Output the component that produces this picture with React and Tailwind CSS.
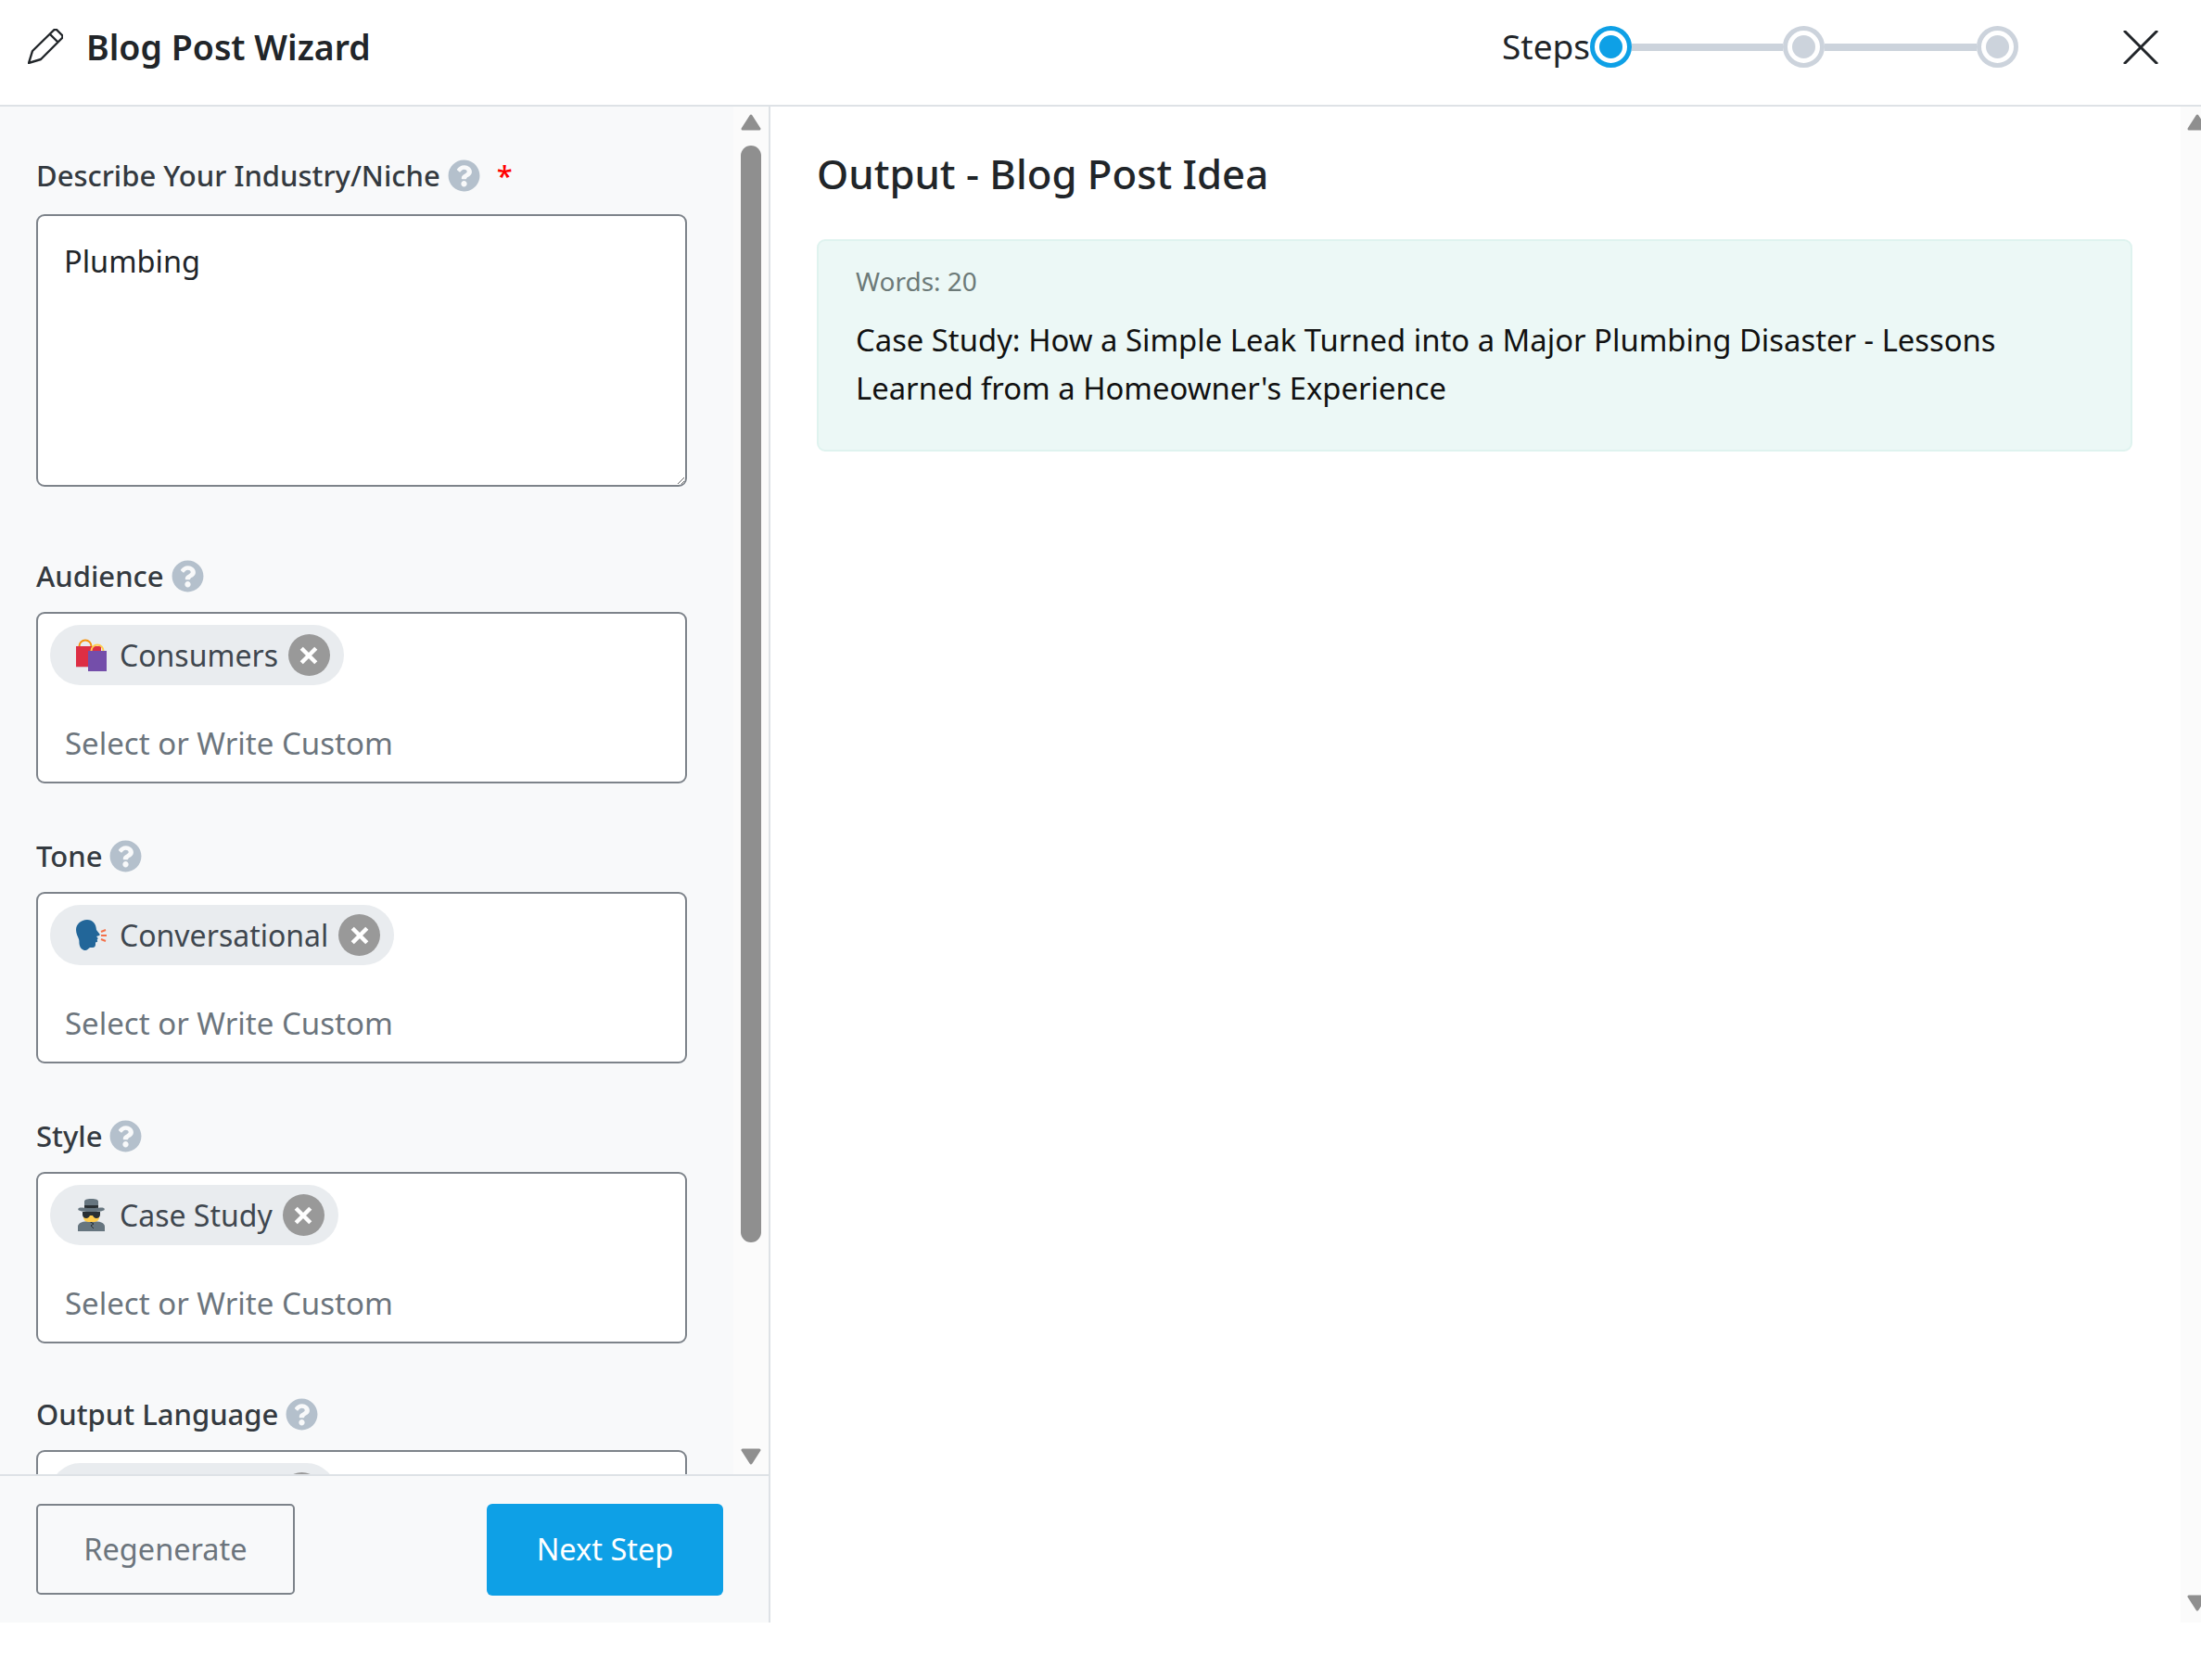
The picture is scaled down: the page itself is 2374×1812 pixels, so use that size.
import { FaQuestionCircle } from "react-icons/fa";

function BagsIcon() {
  return (
    <svg viewBox="0 0 33 35" className="w-[33px] h-[35px] shrink-0">
      <circle cx="10" cy="8" r="6.500" fill="none" stroke="#f4900c" strokeWidth="2" />
      <rect x="0" y="8" width="27" height="22" fill="#dd2e44" />
      <rect x="0" y="30" width="27" height="1" fill="#d9b8c4" />
      <circle cx="23" cy="13" r="6.500" fill="none" stroke="#ffcc4d" strokeWidth="2" />
      <rect x="13" y="13" width="20" height="22" fill="#744eaa" />
    </svg>
  );
}

function HeadIcon() {
  return (
    <svg viewBox="0 0 33 35" className="w-[33px] h-[35px] shrink-0">
      <path
        d="M12 1C5 1 0 6 0 12c0 4 2 7 3 10 .8 2.500 0 4 1 7 .8 2.600 3 5 6 5 2 0 3-2 5-3h3c2 0 3-1.500 3-3.500v-2c1.500 0 2.500-.7 2-1.700l-.3-1.300c1-.5 1.200-1.200.6-2l-1.300-1.500 3-1c.7-.3.800-1 .3-1.700L22 12C21.500 5 18 1 12 1z"
        fill="#226699"
      />
      <path d="M27 14l5-2M27 18h6M27 22l5 2" stroke="#f4714a" strokeWidth="2" fill="none" />
    </svg>
  );
}

function DetectiveIcon() {
  return (
    <svg viewBox="0 0 33 35" className="w-[33px] h-[35px] shrink-0">
      <path d="M2 35v-5c0-4 5-6 14.500-6S31 26 31 30v5z" fill="#66757f" />
      <path d="M14 24l5 3-3 2 3 3" fill="none" stroke="#292f33" strokeWidth="1" />
      <rect x="8" y="13" width="17" height="12" rx="5" fill="#ffcc4d" />
      <path d="M7 14h19v3c0 2.500-2 4-4 4s-3.500-1.500-4-3h-3c-.5 1.500-2 3-4 3s-4-1.500-4-4z" fill="#292f33" />
      <path d="M9 3c0-2 2-3 7.500-3S24 1 24 3v7H9z" fill="#66757f" />
      <rect x="9" y="7" width="15" height="3" fill="#292f33" />
      <path d="M3 10c3-1 4 0 13.500 0S27 9 30 10c1 .5 1 2 0 2.500-3 1-5 1.500-13.500 1.500S6 13.500 3 12.500c-1-.5-1-2 0-2.500z" fill="#66757f" />
    </svg>
  );
}

function Arrow({ down }) {
  return (
    <svg viewBox="0 0 24 18" className="w-[24px] h-[18px] shrink-0">
      <path
        d={down ? "M3 2h18l-9 14z" : "M12 2l9 14H3z"}
        fill="#8f8f8f"
        stroke="#8f8f8f"
        strokeWidth="3"
        strokeLinejoin="round"
      />
    </svg>
  );
}

function Chip({ icon, label }) {
  return (
    <span className="inline-flex items-center h-[65px] rounded-full bg-[#e9ecef] pl-[28px] pr-[15px]">
      <span className="w-[33px] h-[35px] shrink-0">{icon}</span>
      {/* last chip sits under the footer, only its top edge shows */}
      {label ? (
        <span className="ml-[14px] text-[32px] text-[#3f474f] whitespace-nowrap">{label}</span>
      ) : (
        <span className="ml-[14px] w-[163px]"></span>
      )}
      <span className="ml-[11px] w-[45px] h-[45px] rounded-full bg-[#999999] flex items-center justify-center shrink-0">
        <svg viewBox="0 0 18 18" className="w-[20px] h-[20px]">
          <path d="M2 2l14 14M16 2L2 16" stroke="#ffffff" strokeWidth="4" />
        </svg>
      </span>
    </span>
  );
}

function Label({ children, required }) {
  return (
    <div className="flex items-center h-[36px] text-[31px] font-medium text-[#343a40]">
      <span>{children}</span>
      <FaQuestionCircle className="ml-[8px] w-[35px] h-[35px] text-[#b4c0cc]" />
      {required && <span className="ml-[18px] text-[#ff0000]">*</span>}
    </div>
  );
}

function ChipField({ label, icon, value, className }) {
  return (
    <div className={className}>
      <Label>{label}</Label>
      <div className="mt-[21px] h-[185px] rounded-[9px] border-2 border-[#7d838a] bg-white flex flex-col items-start pl-[13px] pt-[12px]">
        <Chip icon={icon} label={value} />
        <input
          placeholder="Select or Write Custom"
          className="mt-[45px] w-full pl-[16px] h-[36px] text-[33px] outline-none placeholder:text-[#6c757d] bg-transparent"
        />
      </div>
    </div>
  );
}

export default function App() {
  return (
    <div className="w-[2374px] h-[1812px] bg-white text-[32.5px] leading-[36px] text-[#212529] font-['Noto_Sans',sans-serif] overflow-hidden">
      <div className="h-[1750px] flex flex-col">
        {/* Header */}
        <header className="h-[115px] shrink-0 border-b-2 border-[#dee2e6] flex items-center pl-[30px] pb-[12px]">
          <svg viewBox="0 0 38 38" className="w-[38px] h-[38px] shrink-0 -mt-[2px]">
            <path
              d="M1 37l4-13L28 1.500Q30 0 31.500 1.500L37 7q1 1.500 0 3L14 33zM24 6l8.500 8.500"
              fill="none"
              stroke="#212529"
              strokeWidth="2.400"
              strokeLinejoin="round"
            />
          </svg>
          <h1 className="ml-[25px] text-[37.5px] leading-[48px] font-semibold">Blog Post Wizard</h1>
          <div className="ml-auto flex items-center">
            <span className="text-[37px] leading-[48px] -mt-[2px] text-[#212529]">Steps</span>
            <span className="w-[45px] h-[45px] rounded-full border-[5px] border-[#0ea0e6] bg-white flex items-center justify-center">
              <span className="w-[25px] h-[25px] rounded-full bg-[#0ea0e6]"></span>
            </span>
            <span className="w-[163px] h-[8px] bg-[#ccd3dc]"></span>
            <span className="w-[45px] h-[45px] rounded-full border-[5px] border-[#ccd3dc] bg-white flex items-center justify-center">
              <span className="w-[25px] h-[25px] rounded-full bg-[#ccd3dc]"></span>
            </span>
            <span className="w-[164px] h-[8px] bg-[#ccd3dc]"></span>
            <span className="w-[45px] h-[45px] rounded-full border-[5px] border-[#ccd3dc] bg-white flex items-center justify-center">
              <span className="w-[25px] h-[25px] rounded-full bg-[#ccd3dc]"></span>
            </span>
          </div>
          <svg viewBox="0 0 38 36" className="ml-[113px] mr-[46px] w-[38px] h-[36px]">
            <path d="M1 0l36 36M37 0L1 36" stroke="#212529" strokeWidth="3" />
          </svg>
        </header>

        <div className="flex-1 flex min-h-0">
          {/* Left form panel */}
          <div className="w-[831px] shrink-0 border-r-2 border-[#dee2e6] bg-[#f8f9fa] flex flex-col">
            <div className="flex-1 flex min-h-0">
              <div className="flex-1 overflow-hidden pl-[39px] pr-[50px] pt-[56px]">
                <Label required>Describe Your Industry/Niche</Label>
                <textarea
                  defaultValue="Plumbing"
                  className="mt-[24px] block w-full h-[294px] rounded-[9px] border-2 border-[#7d838a] bg-white pl-[28px] pt-[31px] leading-[36px] outline-none"
                />
                <ChipField className="mt-[78px]" label="Audience" icon={<BagsIcon />} value="Consumers" />
                <ChipField className="mt-[60px]" label="Tone" icon={<HeadIcon />} value="Conversational" />
                <ChipField className="mt-[60px]" label="Style" icon={<DetectiveIcon />} value="Case Study" />
                <ChipField className="mt-[58px]" label="Output Language" />
              </div>
              <div className="w-[38px] shrink-0 bg-[#fbfbfb] flex flex-col items-center pt-[8px]">
                <Arrow />
                <div className="mt-[16px] w-[22px] h-[1183px] rounded-full bg-[#8f8f8f] shrink-0"></div>
                <div className="mt-[222px]">
                  <Arrow down />
                </div>
              </div>
            </div>
            <div className="h-[160px] shrink-0 border-t-2 border-[#dee2e6] flex items-center justify-between pl-[39px] pr-[49px]">
              <button className="w-[279px] h-[98px] rounded-[5px] border-2 border-[#7d838a] text-[#6c757d]">Regenerate</button>
              <button className="w-[255px] h-[99px] rounded-[6px] bg-[#0ea0e6] text-white">Next Step</button>
            </div>
          </div>

          {/* Right output panel */}
          <div className="flex-1 flex min-w-0">
            <div className="flex-1 pl-[50px] pr-[52px] pt-[46px]">
              <h2 className="text-[43.7px] leading-[52px] font-medium">Output - Blog Post Idea</h2>
              <div className="mt-[45px] h-[229px] rounded-[9px] border-2 border-[#dff3ef] bg-[#ecf8f6] pl-[40px] pr-[60px] pt-[25px]">
                <p className="text-[28px] leading-[36px] text-[#6c7a78]">Words: 20</p>
                <p className="mt-[20px] text-[32.8px] leading-[52px] text-[#111111]">
                  Case Study: How a Simple Leak Turned into a Major Plumbing Disaster - Lessons Learned from a Homeowner's Experience
                </p>
              </div>
            </div>
            <div className="w-[22px] shrink-0 bg-[#fbfbfb] overflow-hidden flex flex-col pl-[6px] pt-[8px] pb-[12px]">
              <Arrow />
              <div className="mt-auto">
                <Arrow down />
              </div>
            </div>
          </div>
        </div>
      </div>
    </div>
  );
}
